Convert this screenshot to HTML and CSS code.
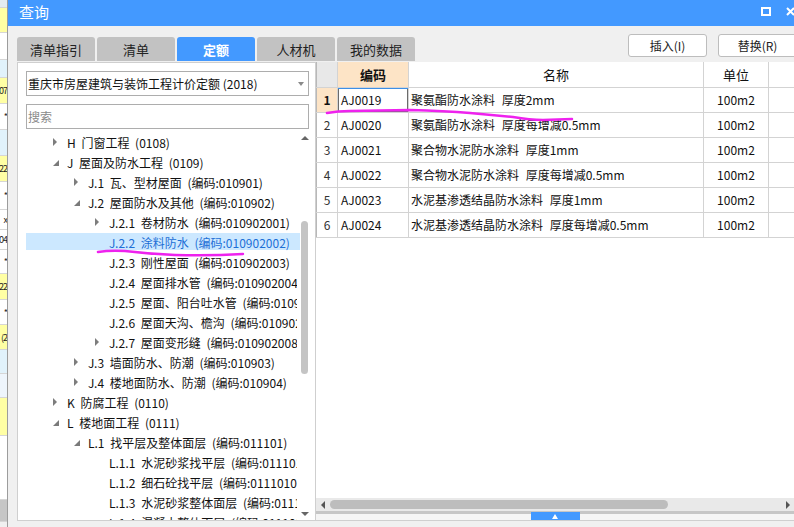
FILE: index.html
```html
<!DOCTYPE html>
<html lang="zh-CN">
<head>
<meta charset="utf-8">
<title>查询</title>
<link rel="stylesheet" href="styles.css">
</head>
<body>
<div class="screen">
  <div class="strip">
    <div class="cell lt h8"></div>
    <div class="cell y h25"></div>
    <div class="cell w h27"></div>
    <div class="cell b h18"></div>
    <div class="cell y h26">07</div>
    <div class="cell w h26">*</div>
    <div class="cell b h26"></div>
    <div class="cell y h26">22</div>
    <div class="cell w h28">*</div>
    <div class="cell w h20">x</div>
    <div class="cell w h20">04</div>
    <div class="cell w h24">*</div>
    <div class="cell y h26">22</div>
    <div class="cell w h25">*</div>
    <div class="cell y h25">(2</div>
    <div class="cell b h24"></div>
    <div class="cell pb h24"></div>
    <div class="cell y h38"></div>
    <div class="cell w h64"></div>
    <div class="cell g h22"></div>
  </div>

  <div class="dialog">
    <div class="titlebar">
      <span class="title">查询</span>
      <div class="winctl">
        <span class="max"></span>
        <svg class="close" viewBox="0 0 9 9" width="9" height="9"><path d="M1 1L8 8M8 1L1 8" stroke="#fff" stroke-width="2" fill="none"/></svg>
      </div>
    </div>

    <div class="toolbar">
      <div class="tabs">
        <div class="tab">清单指引</div>
        <div class="tab">清单</div>
        <div class="tab on">定额</div>
        <div class="tab">人材机</div>
        <div class="tab">我的数据</div>
      </div>
      <div class="actions">
        <button class="btn">插入(I)</button>
        <button class="btn">替换(R)</button>
      </div>
    </div>

    <div class="content">
      <div class="left">
        <div class="select"><span class="select-text">重庆市房屋建筑与装饰工程计价定额 (2018)</span><span class="caret"></span></div>
        <div class="search">搜索</div>
        <div class="tree">
          <div class="tree-list">
            <div class="row l0"><span class="tw c"></span><span class="lbl">H 门窗工程 (0108)</span></div>
            <div class="row l0"><span class="tw e"></span><span class="lbl">J 屋面及防水工程 (0109)</span></div>
            <div class="row l1"><span class="tw c"></span><span class="lbl">J.1 瓦、型材屋面 (编码:010901)</span></div>
            <div class="row l1"><span class="tw e"></span><span class="lbl">J.2 屋面防水及其他 (编码:010902)</span></div>
            <div class="row l2"><span class="tw c"></span><span class="lbl">J.2.1 卷材防水 (编码:010902001)</span></div>
            <div class="row l2 sel"><span class="tw"></span><span class="lbl">J.2.2 涂料防水 (编码:010902002)</span></div>
            <div class="row l2"><span class="tw"></span><span class="lbl">J.2.3 刚性屋面 (编码:010902003)</span></div>
            <div class="row l2"><span class="tw"></span><span class="lbl">J.2.4 屋面排水管 (编码:010902004)</span></div>
            <div class="row l2"><span class="tw"></span><span class="lbl">J.2.5 屋面、阳台吐水管 (编码:010902005)</span></div>
            <div class="row l2"><span class="tw"></span><span class="lbl">J.2.6 屋面天沟、檐沟 (编码:010902006)</span></div>
            <div class="row l2"><span class="tw c"></span><span class="lbl">J.2.7 屋面变形缝 (编码:010902008)</span></div>
            <div class="row l1"><span class="tw c"></span><span class="lbl">J.3 墙面防水、防潮 (编码:010903)</span></div>
            <div class="row l1"><span class="tw c"></span><span class="lbl">J.4 楼地面防水、防潮 (编码:010904)</span></div>
            <div class="row l0"><span class="tw c"></span><span class="lbl">K 防腐工程 (0110)</span></div>
            <div class="row l0"><span class="tw e"></span><span class="lbl">L 楼地面工程 (0111)</span></div>
            <div class="row l1"><span class="tw e"></span><span class="lbl">L.1 找平层及整体面层 (编码:011101)</span></div>
            <div class="row l2"><span class="tw"></span><span class="lbl">L.1.1 水泥砂浆找平层 (编码:011101001)</span></div>
            <div class="row l2"><span class="tw"></span><span class="lbl">L.1.2 细石砼找平层 (编码:011101002)</span></div>
            <div class="row l2"><span class="tw"></span><span class="lbl">L.1.3 水泥砂浆整体面层 (编码:011101003)</span></div>
            <div class="row l2"><span class="tw"></span><span class="lbl">L.1.4 混凝土整体面层 (编码:011101004)</span></div>
          </div>
          <div class="vscroll">
            <span class="up"></span>
            <div class="vtrack"><div class="vthumb"></div></div>
            <span class="down"></span>
          </div>
        </div>
      </div>

      <div class="right">
        <div class="grid-wrap">
          <table class="grid">
            <colgroup>
              <col class="c-num"><col class="c-code"><col class="c-name"><col class="c-unit"><col class="c-more">
            </colgroup>
            <thead>
              <tr>
                <th class="num"></th>
                <th class="hsel">编码</th>
                <th>名称</th>
                <th>单位</th>
                <th></th>
              </tr>
            </thead>
            <tbody>
              <tr class="cur"><td class="num">1</td><td class="code focus">AJ0019</td><td class="name">聚氨酯防水涂料 厚度2mm</td><td class="unit">100m2</td><td></td></tr>
              <tr><td class="num">2</td><td class="code">AJ0020</td><td class="name">聚氨酯防水涂料 厚度每增减0.5mm</td><td class="unit">100m2</td><td></td></tr>
              <tr><td class="num">3</td><td class="code">AJ0021</td><td class="name">聚合物水泥防水涂料 厚度1mm</td><td class="unit">100m2</td><td></td></tr>
              <tr><td class="num">4</td><td class="code">AJ0022</td><td class="name">聚合物水泥防水涂料 厚度每增减0.5mm</td><td class="unit">100m2</td><td></td></tr>
              <tr><td class="num">5</td><td class="code">AJ0023</td><td class="name">水泥基渗透结晶防水涂料 厚度1mm</td><td class="unit">100m2</td><td></td></tr>
              <tr><td class="num">6</td><td class="code">AJ0024</td><td class="name">水泥基渗透结晶防水涂料 厚度每增减0.5mm</td><td class="unit">100m2</td><td></td></tr>
            </tbody>
          </table>
        </div>
        <div class="hscroll">
          <span class="larr"></span>
          <div class="htrack"><div class="hthumb"></div></div>
          <span class="rarr"></span>
        </div>
        <div class="splitter"><span class="handle"></span></div>
      </div>
    </div>
  </div>

  <svg class="marks" viewBox="0 0 794 527" width="794" height="527">
    <path d="M327 113 Q 338 111 350 111 L 410 110 Q 445 111 470 113 Q 492 115 513 117 Q 530 120 543 120 L 572 119" />
    <path d="M98 252 Q 110 250 125 251 Q 150 254 175 255 Q 210 256 243 254" />
  </svg>
</div>
</body>
</html>
```

FILE: styles.css
```css
* { box-sizing: border-box; }
html, body { margin: 0; padding: 0; }
body {
  width: 794px;
  height: 527px;
  overflow: hidden;
  background: #f0f0f0;
  font-family: "Noto Sans CJK SC", "Liberation Sans", sans-serif;
  font-size: 12px;
  color: #111;
}
.screen { position: relative; display: flex; width: 794px; height: 527px; }

/* underlying window strip */
.strip {
  width: 8px; flex: none;
  border-right: 1px solid #9c9c9c;
  display: flex; flex-direction: column;
  overflow: hidden; background: #f0f0f0;
}
.cell {
  flex: none;
  border-bottom: 1px solid #d6d6d6;
  display: flex; align-items: center; justify-content: flex-end;
  font-size: 9px; line-height: 1; white-space: nowrap; overflow: hidden;
  letter-spacing: -1px;
  color: #222;
}
.cell.y { background: #ffffa4; }
.cell.b { background: #e1f2fb; }
.cell.w { background: #fff; }
.cell.lt { background: #e4ecf0; }
.cell.pb { background: #eef5fc; }
.cell.g { background: #c6c6c6; }
.h8 { height: 8px; } .h18 { height: 18px; } .h20 { height: 20px; } .h22 { height: 22px; }
.h24 { height: 24px; } .h25 { height: 25px; } .h26 { height: 26px; } .h27 { height: 27px; }
.h28 { height: 28px; } .h38 { height: 38px; } .h64 { height: 64px; }

/* dialog */
.dialog { flex: 1; min-width: 0; display: flex; flex-direction: column; }
.titlebar {
  height: 26px; flex: none;
  background: #4399ff; color: #fff;
  display: flex; align-items: center;
  padding: 0 0 4px 11px;
}
.title { font-size: 15px; line-height: 1; }
.winctl { margin-left: auto; display: flex; align-items: center; gap: 15px; margin-right: -1px; }
.max { width: 10px; height: 9px; border: 2px solid #fff; }
.close { display: block; }

.toolbar { height: 36px; flex: none; display: flex; padding-left: 9px; }
.tabs { display: flex; gap: 2px; align-self: flex-end; margin-bottom: 1px; }
.tab {
  width: 78px; height: 24px;
  background: #c2c2c2; border-radius: 3px 3px 0 0;
  display: flex; align-items: center; justify-content: center;
  font-size: 13px; color: #222;
}
.tab.on { background: #4399ff; color: #fff; font-weight: bold; }
.actions { margin-left: auto; margin-top: 8px; margin-right: -3px; display: flex; gap: 11px; align-self: flex-start; }
.btn {
  width: 79px; height: 23px; padding: 0;
  background: #fff; border: 1px solid #bdbdbd; border-radius: 3px;
  font-family: "Noto Sans CJK SC", "Liberation Sans", sans-serif;
  font-size: 12px; color: #222;
}

.content { height: 459px; flex: none; display: flex; padding-left: 9px; }

/* left panel */
.left {
  width: 299px; flex: none;
  border: 1px solid #cfcfcf; background: #fff;
  padding: 8px 6px 0 8px;
  display: flex; flex-direction: column;
}
.select {
  height: 25px; flex: none;
  border: 1px solid #adadad;
  display: flex; align-items: center; padding-left: 1px;
  white-space: nowrap;
}
.select-text { flex: 1; font-size: 12px; color: #111; }
.caret {
  border-top: 4px solid #8a8a8a; border-left: 3px solid transparent; border-right: 3px solid transparent;
  margin-right: 4px;
}
.search {
  height: 25px; flex: none; margin-top: 8px;
  border: 1px solid #adadad;
  display: flex; align-items: center; padding-left: 1px;
  color: #8a8a8a; font-size: 12px;
}
.tree { flex: 1; min-height: 0; margin-top: 2px; display: flex; }
.tree-list { flex: 1; min-width: 0; overflow: hidden; padding-top: 1px; padding-right: 3px; }
.row { height: 20px; display: flex; align-items: center; white-space: nowrap; color: #111; overflow: hidden; }
.l0 { padding-left: 26px; }
.l1 { padding-left: 47px; }
.l2 { padding-left: 68px; }
.lbl { word-spacing: 3px; }
.tw { width: 15px; flex: none; display: flex; align-items: center; }
.tw.c::before {
  content: ""; margin-left: 1px;
  border-left: 4px solid #7d7d7d; border-top: 4px solid transparent; border-bottom: 4px solid transparent;
}
.tw.e::before {
  content: ""; margin-left: 1px; margin-top: 2px;
  border-bottom: 6px solid #7a7a7a; border-left: 6px solid transparent;
}
.row.sel {
  margin-right: -3px;
  background: linear-gradient(transparent 1px, #cce8ff 1px, #cce8ff 18px, transparent 18px);
  color: #1d6fd6;
}
.vscroll { width: 9px; flex: none; display: flex; flex-direction: column; align-items: center; padding-top: 5px; }
.up { border-bottom: 4px solid #666; border-left: 4px solid transparent; border-right: 4px solid transparent; }
.vtrack { flex: 1; width: 100%; display: flex; justify-content: center; }
.vthumb { width: 7px; height: 153px; margin-top: 81px; border-radius: 4px; background: #c4c4c4; }
.down { border-top: 4px solid #666; border-left: 4px solid transparent; border-right: 4px solid transparent; margin-bottom: 4px; }

/* right panel */
.right { flex: 1; min-width: 0; display: flex; flex-direction: column; background: #fff; border-bottom: 1px solid #cfcfcf; }
.grid-wrap { flex: 1; min-height: 0; overflow: hidden; }
.grid { border-collapse: collapse; table-layout: fixed; width: 512px; }
.c-num { width: 21px; } .c-code { width: 71px; } .c-name { width: 295px; } .c-unit { width: 65px; } .c-more { width: 60px; }
.grid th, .grid td {
  height: 25px; padding: 0;
  border: 1px solid #d3d3d3;
  white-space: nowrap; overflow: hidden;
}
.grid tr > :first-child { border-left-color: #b8b8b8; }
.grid th { font-weight: normal; font-size: 13px; background: #fff; text-align: center; color: #111; border-top: none; }
.grid th.num { background: #e8e8e8; }
.grid th.hsel { background: #fde4c6; font-weight: bold; }
.grid td { font-size: 12px; color: #111; }
.grid td.num { text-align: center; color: #333; }
.grid td.code { padding-left: 3px; }
.grid td.name { padding-left: 2px; word-spacing: 4px; }
.grid td.unit { text-align: center; }
.grid tr.cur td.num { background: #fde4c6; font-weight: bold; color: #111; }
.grid td.focus { box-shadow: inset 0 1px 0 #3d8fe6, inset 1px 0 0 #6b6b6b, inset -1px 0 0 #6b6b6b, inset 0 -1px 0 #6b6b6b; }

.hscroll { height: 13px; flex: none; background: #e9e9e9; display: flex; align-items: center; }
.larr { margin-left: 5px; border-right: 4px solid #555; border-top: 4px solid transparent; border-bottom: 4px solid transparent; }
.htrack { flex: 1; display: flex; }
.hthumb { width: 338px; height: 9px; margin-left: 5px; border-radius: 5px; background: #bdbdbd; }
.rarr { margin-right: 4px; border-left: 4px solid #555; border-top: 4px solid transparent; border-bottom: 4px solid transparent; }

.splitter {
  height: 9px; flex: none;
  background: linear-gradient(#c6c6c6 0, #c6c6c6 3px, #f5f5f5 3px);
  display: flex; justify-content: center;
}
.handle {
  width: 49px; height: 8px; margin-top: 1px;
  background: #4399ff;
  display: flex; align-items: center; justify-content: center;
}
.handle::before {
  content: "";
  border-bottom: 5px solid #fff; border-left: 3px solid transparent; border-right: 3px solid transparent;
}

/* hand-drawn annotation marks */
.marks { position: absolute; left: 0; top: 0; pointer-events: none; }
.marks path { fill: none; stroke: #ee22ee; stroke-width: 2.5; stroke-linecap: round; stroke-linejoin: round; }
```
